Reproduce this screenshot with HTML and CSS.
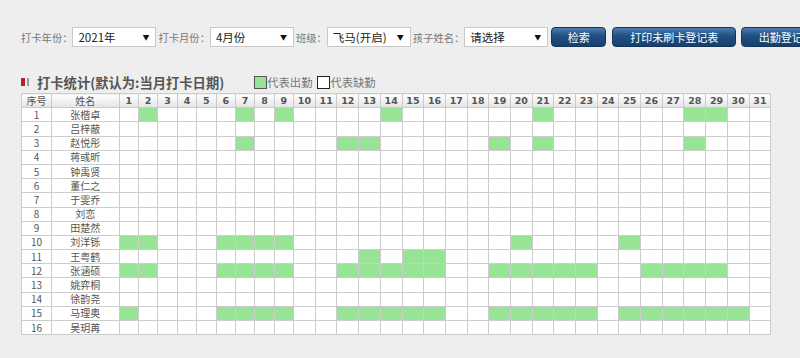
FILE: index.html
```html
<!DOCTYPE html>
<html lang="zh-CN">
<head>
    <meta charset="UTF-8">
    <meta name="viewport" content="width=device-width, initial-scale=1.0">
    <title>打卡统计</title>
    <link rel="stylesheet" href="styles.css">
</head>
<body>

<div class="search">
    <span class="label">打卡年份：</span>
    <div class="select"><span>2021年</span><span class="arrow">▼</span></div>
    <span class="label">打卡月份：</span>
    <div class="select"><span>4月份</span><span class="arrow">▼</span></div>
    <span class="label">班级：</span>
    <div class="select"><span>飞马(开启)</span><span class="arrow">▼</span></div>
    <span class="label">孩子姓名：</span>
    <div class="select"><span>请选择</span><span class="arrow">▼</span></div>
    <button class="btn btn-search">检索</button>
    <button class="btn btn-print">打印未刷卡登记表</button>
    <button class="btn btn-record">出勤登记表</button>
</div>

<div class="title-row">
    <span class="mark"></span><span class="mark-bar"></span>
    <h2 class="title">打卡统计(默认为:当月打卡日期)</h2>
    <span class="legend-box present"></span><span class="legend-text">代表出勤</span>
    <span class="legend-box absent"></span><span class="legend-text">代表缺勤</span>
</div>

<table class="grid" id="grid">
    <colgroup id="cols"></colgroup>
    <thead><tr id="head"></tr></thead>
    <tbody id="rows"></tbody>
</table>

<script>
    const students = ['张楷卓', '吕梓蔽', '赵悦彤', '蒋彧昕', '钟禹贤', '董仁之', '于雯乔', '刘恋',
        '田楚然', '刘洋铄', '王粤鹤', '张涵硕', '姚弈桐', '徐韵尧', '马理奥', '吴玥苒'];

    // days each child swiped the card (row number -> days)
    const attendance = {
        1: [2, 7, 9, 14, 21, 28, 29],
        3: [7, 12, 13, 19, 21, 28],
        10: [1, 2, 6, 7, 8, 9, 20, 25],
        11: [13, 15, 16],
        12: [1, 2, 6, 7, 8, 9, 12, 13, 14, 15, 16, 19, 20, 21, 22, 23, 26, 27, 28, 29],
        15: [1, 6, 7, 8, 9, 12, 13, 14, 15, 16, 19, 20, 21, 22, 23, 25, 26, 27, 28, 29, 30]
    };

    const cols = document.getElementById('cols');
    const head = document.getElementById('head');
    let colHtml = '<col class="c-no"><col class="c-name">';
    let headHtml = '<th>序号</th><th>姓名</th>';
    for (let d = 1; d <= 31; d++) {
        colHtml += `<col class="${d < 10 ? 'c-day' : 'c-day2'}">`;
        headHtml += `<th class="day">${d}</th>`;
    }
    cols.innerHTML = colHtml;
    head.innerHTML = headHtml;

    let rowsHtml = '';
    students.forEach((name, i) => {
        const days = attendance[i + 1] || [];
        rowsHtml += `<tr><td>${i + 1}</td><td>${name}</td>`;
        for (let d = 1; d <= 31; d++) {
            rowsHtml += days.includes(d) ? '<td class="on"></td>' : '<td></td>';
        }
        rowsHtml += '</tr>';
    });
    document.getElementById('rows').innerHTML = rowsHtml;
</script>

</body>
</html>
```

FILE: styles.css
```css
body {
    margin: 0;
    padding: 27px 0 0 21px;
    background-color: #eeeeee;
    font-family: "Noto Sans CJK SC", "Liberation Sans", sans-serif;
    color: #555;
    overflow: hidden;
}
.search {
    display: flex;
    align-items: center;
    height: 20px;
    white-space: nowrap;
}
.search > * {
    flex-shrink: 0;
}
.label {
    font-size: 10.3px;
    color: #777;
    margin-right: 0;
}
.select {
    display: flex;
    align-items: center;
    justify-content: space-between;
    box-sizing: border-box;
    width: 84px;
    height: 20px;
    padding: 0 6px 0 5px;
    margin-right: 2px;
    background-color: #fff;
    border: 1px solid #c9c9c9;
    font-size: 11.5px;
    color: #222;
}
.arrow {
    font-size: 7px;
    color: #111;
}
.btn {
    box-sizing: border-box;
    height: 20px;
    margin-left: 1px;
    padding: 0;
    font-family: inherit;
    font-size: 11px;
    color: #fff;
    background: linear-gradient(#4d7eae, #1f4f82 45%, #183f6c);
    border: 1px solid #14355a;
    border-radius: 4px;
}
.btn-search {
    width: 55px;
}
.btn-print {
    width: 124px;
    margin-left: 6px;
}
.btn-record {
    width: 90px;
    margin-left: 5px;
}
.title-row {
    display: flex;
    align-items: center;
    height: 14px;
    margin-top: 28px;
}
.mark {
    width: 4px;
    height: 8px;
    background-color: #b0262b;
}
.mark-bar {
    width: 2px;
    height: 8px;
    margin-left: 2px;
    background-color: #9a9a9a;
}
.title {
    margin: 0 30px 0 8px;
    font-size: 13.3px;
    font-weight: bold;
    color: #555;
    white-space: nowrap;
}
.legend-box {
    box-sizing: border-box;
    width: 13px;
    height: 13px;
}
.legend-box.present {
    background-color: #97e497;
    border: 1px solid #555;
}
.legend-box.absent {
    background-color: #fff;
    border: 1px solid #222;
}
.legend-text {
    font-size: 11.3px;
    color: #777;
    margin-right: 5px;
    white-space: nowrap;
}
.grid {
    margin-top: 4px;
    width: 750px;
    table-layout: fixed;
    border-collapse: collapse;
    background-color: #fff;
}
.c-no {
    width: 30px;
}
.c-name {
    width: 67.6px;
}
.c-day {
    width: 19.4px;
}
.c-day2 {
    width: 21.7px;
}
.grid th,
.grid td {
    height: 13.2px;
    padding: 0;
    border: 1px solid #cccccc;
    text-align: center;
    font-size: 10px;
    line-height: 12px;
    color: #555;
    overflow: hidden;
}
.grid th {
    font-weight: normal;
    background: linear-gradient(#ffffff, #e4e4e4);
}
.grid th.day {
    font-family: "DejaVu Sans", sans-serif;
    font-size: 9.5px;
    font-weight: bold;
    color: #555;
}
.grid td.on {
    background-color: #97e497;
}
```
